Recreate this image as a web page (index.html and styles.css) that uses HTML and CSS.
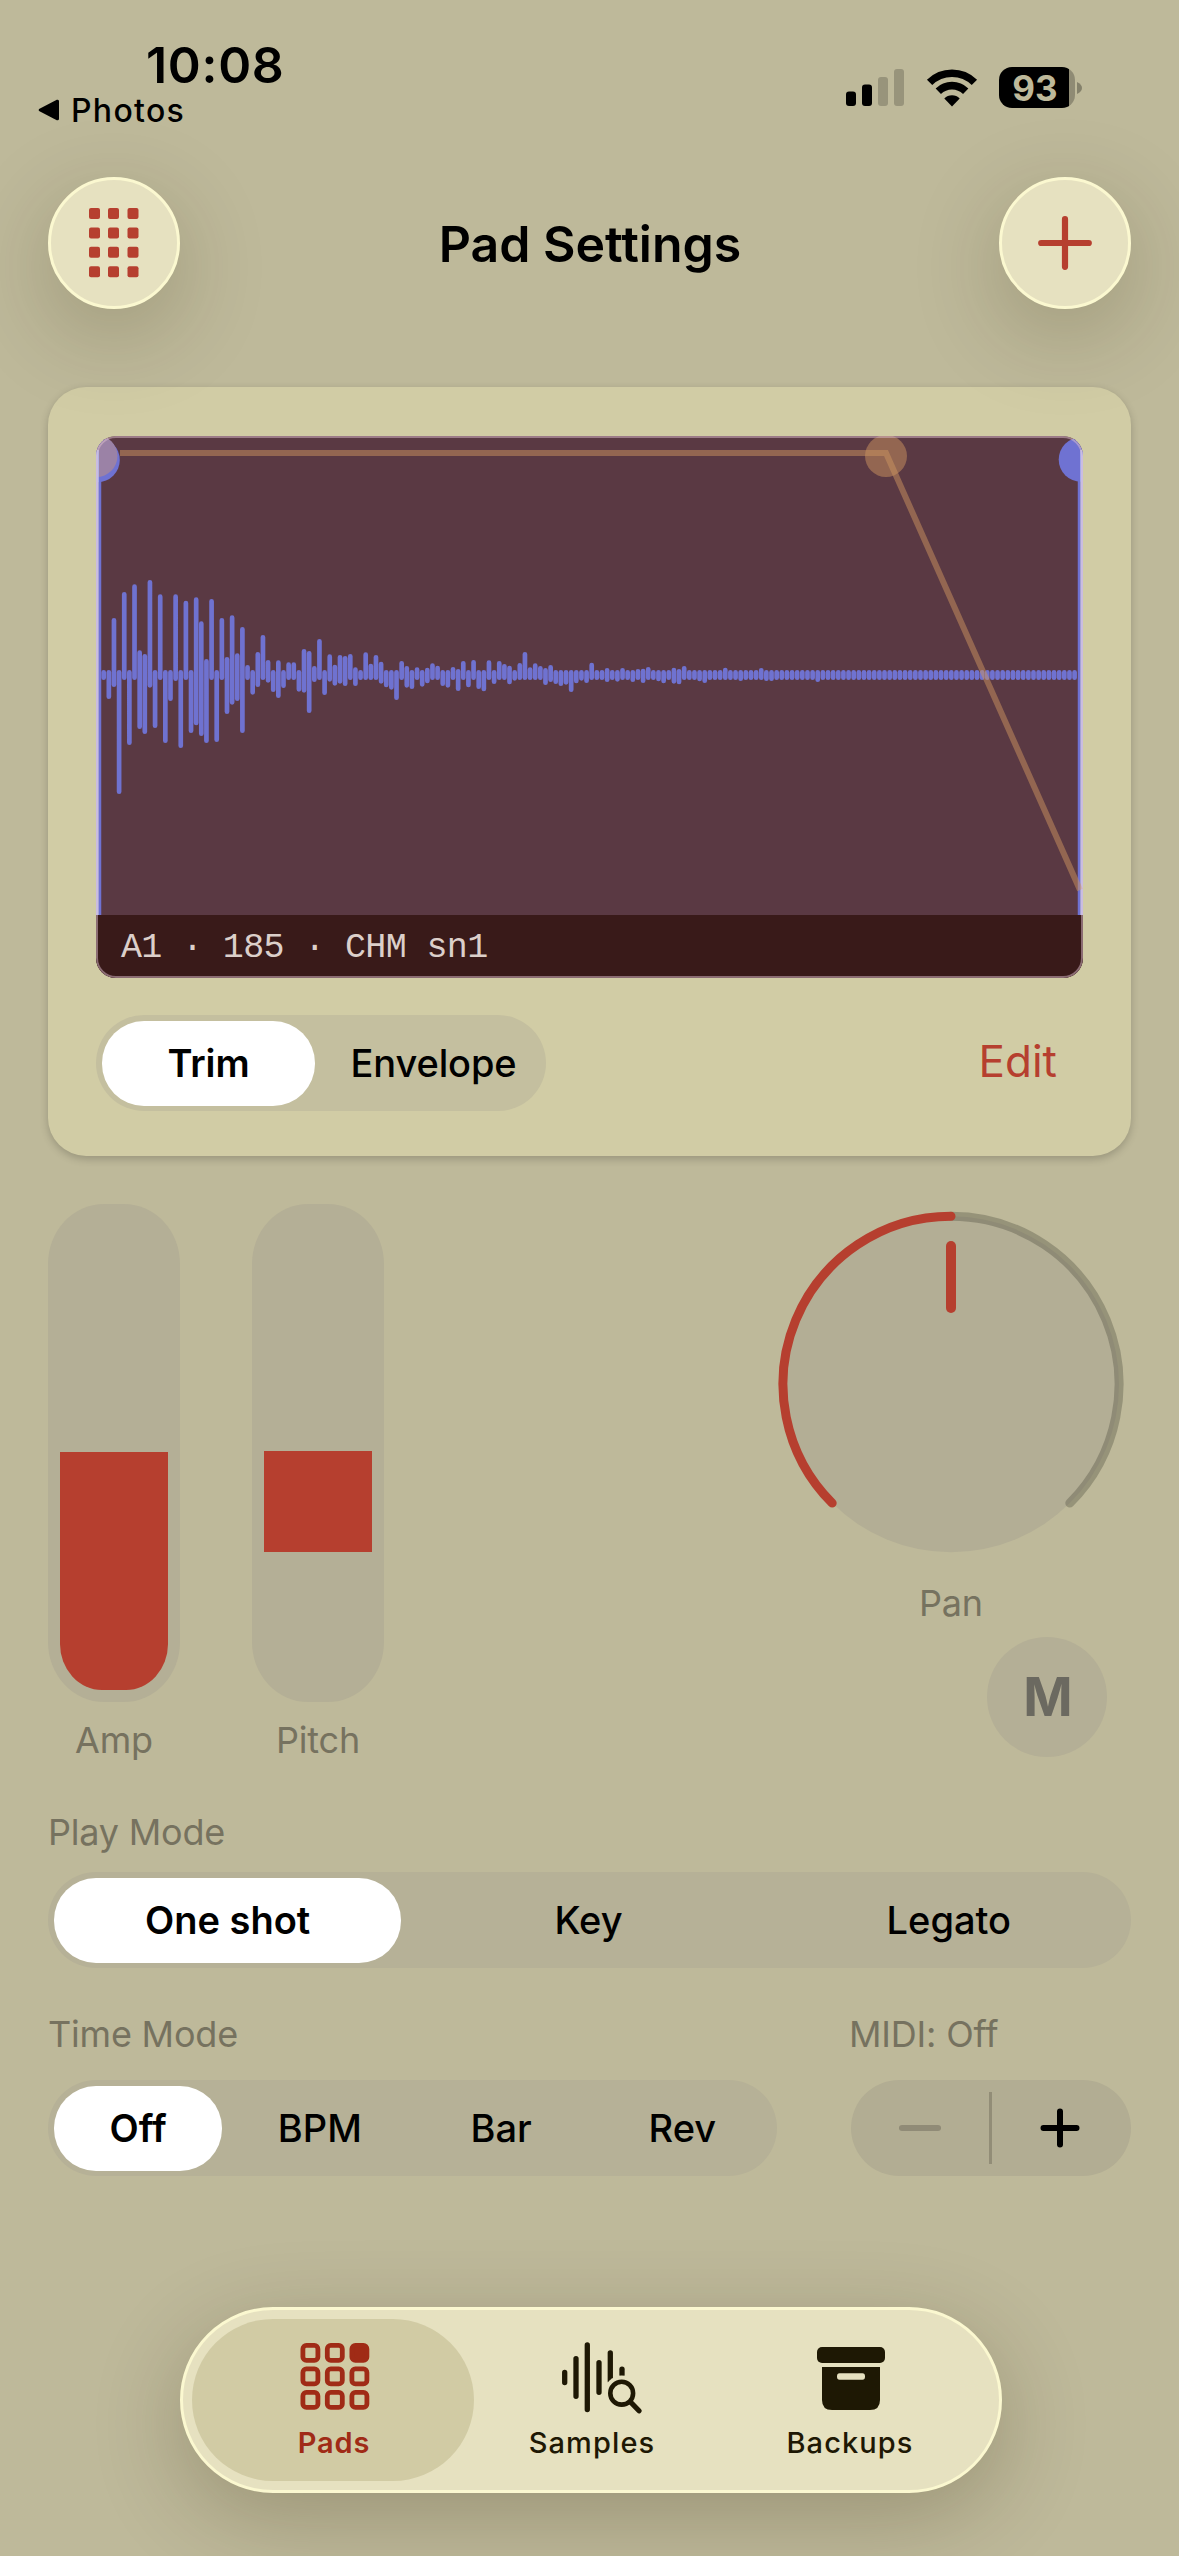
FILE: index.html
```html
<!DOCTYPE html>
<html lang="en">
<head>
<meta charset="utf-8">
<title>Pad Settings</title>
<link rel="stylesheet" href="styles.css">
</head>
<body>
<div class="screen">
  <div class="status">
    <div class="status-left">
      <div class="time">10:08</div>
      <div class="back">
        <svg width="22" height="22" viewBox="0 0 22 22"><path d="M2.2 11 L19.5 2.2 V19.8 Z" fill="#000" stroke="#000" stroke-width="3" stroke-linejoin="round"/></svg>
        <span>Photos</span>
      </div>
    </div>
    <div class="status-right">
      <svg class="signal" width="58" height="38" viewBox="0 0 58 38">
        <rect x="0" y="22.5" width="10" height="14.5" rx="3"/>
        <rect x="16" y="15.5" width="10" height="21.5" rx="3"/>
        <rect x="32" y="8" width="10" height="29" rx="3" fill-opacity=".2"/>
        <rect x="48" y="0" width="10" height="37" rx="3" fill-opacity=".2"/>
      </svg>
      <svg class="wifi" width="52" height="38" viewBox="0 0 52 38">
        <path d="M3.6 13.4 A32 32 0 0 1 48.4 13.4" fill="none" stroke="#000" stroke-width="7.6"/>
        <path d="M12.3 22.2 A19.6 19.6 0 0 1 39.7 22.2" fill="none" stroke="#000" stroke-width="7.6"/>
        <path d="M26 37.5 L18.3 29.4 A11 11 0 0 1 33.7 29.4 Z"/>
      </svg>
      <div class="battery">93</div>
      <svg width="5" height="12" viewBox="0 0 5 12"><path d="M0 0 Q5 2.5 5 6 Q5 9.5 0 12 Z" fill-opacity=".3"/></svg>
    </div>
  </div>

  <header class="header">
    <button class="round">
      <svg width="50" height="70" viewBox="0 0 50 70" fill="#b63f2f">
        <rect x="0" y="0" width="11" height="11" rx="2"/><rect x="19" y="0" width="11" height="11" rx="2"/><rect x="38.5" y="0" width="11" height="11" rx="2"/>
        <rect x="0" y="19.4" width="11" height="11" rx="2"/><rect x="19" y="19.4" width="11" height="11" rx="2"/><rect x="38.5" y="19.4" width="11" height="11" rx="2"/>
        <rect x="0" y="38.8" width="11" height="11" rx="2"/><rect x="19" y="38.8" width="11" height="11" rx="2"/><rect x="38.5" y="38.8" width="11" height="11" rx="2"/>
        <rect x="0" y="58.2" width="11" height="11" rx="2"/><rect x="19" y="58.2" width="11" height="11" rx="2"/><rect x="38.5" y="58.2" width="11" height="11" rx="2"/>
      </svg>
    </button>
    <h1>Pad Settings</h1>
    <button class="round">
      <svg width="54" height="54" viewBox="0 0 54 54"><path d="M27 3.2 V50.8 M3.2 27 H50.8" stroke="#b63f2f" stroke-width="6.2" stroke-linecap="round"/></svg>
    </button>
  </header>

  <section class="card">
    <div class="wave">
      <svg class="plot" width="987" height="479" viewBox="0 0 987 479">
        <path id="bars" fill="none" stroke="#6f72d0" stroke-width="4.7" stroke-linecap="round"/>
        <path d="M4 24 V479 M983 24 V479" stroke="#6f72d2" stroke-width="2.5"/>
        <circle cx="1.5" cy="24" r="22.3" fill="#6f72d2"/>
        <circle cx="985" cy="23.5" r="22.3" fill="#6f72d2"/>
        <circle cx="0.5" cy="20" r="21" fill="#9b82a6"/>
        <path d="M1.4 14 V479 M985.6 14 V479" stroke="#b7bbf2" stroke-width="2.8"/>
        <path d="M24 17 H790 L984 454" fill="none" stroke="#cc9460" stroke-opacity=".5" stroke-width="6"/>
        <circle cx="790" cy="20" r="21" fill="#cc9460" fill-opacity=".5"/>
      </svg>
      <div class="wave-name">A1 · 185 · CHM sn1</div>
      <div class="wave-edge"></div>
    </div>
    <div class="card-row">
      <div class="segments seg-edit"><div class="on">Trim</div><div>Envelope</div></div>
      <a class="edit">Edit</a>
    </div>
  </section>

  <section class="controls">
    <div class="slider">
      <div class="track"><div class="fill-amp"></div></div>
      <label>Amp</label>
    </div>
    <div class="slider">
      <div class="track"><div class="fill-pitch"></div></div>
      <label>Pitch</label>
    </div>
    <div class="knob">
      <svg width="360" height="360" viewBox="0 0 360 360" fill="none" stroke-linecap="round">
        <circle cx="180" cy="180.3" r="168" fill="#b3ae95"/>
        <path d="M180 12.3 A168 168 0 0 1 298.8 299.1" stroke="#3c3a30" stroke-opacity=".3" stroke-width="9"/>
        <path d="M61.2 299.1 A168 168 0 0 1 180 12.3" stroke="#b63f2f" stroke-width="9"/>
        <path d="M180 42 V104" stroke="#b63f2f" stroke-width="10"/>
      </svg>
      <label>Pan</label>
      <div class="mute">M</div>
    </div>
  </section>

  <section class="field">
    <label>Play Mode</label>
    <div class="segments seg-play"><div class="on">One shot</div><div>Key</div><div>Legato</div></div>
  </section>

  <section class="fields">
    <div class="field time-field">
      <label>Time Mode</label>
      <div class="segments seg-time"><div class="on">Off</div><div>BPM</div><div>Bar</div><div>Rev</div></div>
    </div>
    <div class="field midi-field">
      <label>MIDI: Off</label>
      <div class="stepper">
        <svg width="42" height="42" viewBox="0 0 42 42"><path d="M3 21 H39" stroke="#908b77" stroke-width="6.2" stroke-linecap="round"/></svg>
        <i></i>
        <svg width="42" height="42" viewBox="0 0 42 42"><path d="M4.5 21 H37.5 M21 4.5 V37.5" stroke="#000" stroke-width="6" stroke-linecap="round"/></svg>
      </div>
    </div>
  </section>

  <nav class="tabs">
    <div class="tab active">
      <svg width="70" height="76" viewBox="0 0 70 76" fill="none" stroke="#a02b16" stroke-width="4.8">
        <rect x="2.9" y="6.4" width="15" height="15" rx="3.5"/><rect x="27.3" y="6.4" width="15" height="15" rx="3.5"/><rect x="51.9" y="6.4" width="15" height="15" rx="3.5" fill="#a02b16"/>
        <rect x="2.9" y="29.9" width="15" height="15" rx="3.5"/><rect x="27.3" y="29.9" width="15" height="15" rx="3.5"/><rect x="51.9" y="29.9" width="15" height="15" rx="3.5"/>
        <rect x="2.9" y="53.4" width="15" height="15" rx="3.5"/><rect x="27.3" y="53.4" width="15" height="15" rx="3.5"/><rect x="51.9" y="53.4" width="15" height="15" rx="3.5"/>
      </svg>
      <b>Pads</b>
    </div>
    <div class="tab tab-samples">
      <svg width="82" height="76" viewBox="0 0 82 76" fill="none" stroke="#1e1804" stroke-width="5.3" stroke-linecap="round">
        <path d="M4.7 33.4 V43.6 M16 19.6 V57.3 M27.3 6 V70.6 M39 23.6 V53.3"/>
        <path d="M50.3 14 V42"/>
        <path d="M62 30.2 V36"/>
        <circle cx="61.7" cy="54.2" r="17.6" fill="#e6e1c0" stroke="none"/>
        <circle cx="61.7" cy="54.2" r="11.4" stroke-width="4.6"/>
        <path d="M70.5 63 L79 71.8" stroke-width="5.2"/>
      </svg>
      <b>Samples</b>
    </div>
    <div class="tab">
      <svg width="68" height="76" viewBox="0 0 68 76" fill="#1e1804">
        <rect x="0" y="8" width="68" height="16" rx="5"/>
        <path fill-rule="evenodd" d="M5 28 H63 V61 Q63 71 53 71 H15 Q5 71 5 61 Z M22.5 34.3 Q20 34.3 20 37.5 Q20 40.7 22.5 40.7 H45.5 Q48 40.7 48 37.5 Q48 34.3 45.5 34.3 Z"/>
      </svg>
      <b>Backups</b>
    </div>
  </nav>
</div>
<script src="wave.js"></script>
</body>
</html>
```

FILE: wave.js
```js
// Peaks above and below the centre line, one [up, down] pair per bar, in thirds of a pixel.
const peaks = [
  [15,15],[15,72],[171,36],[15,357],[249,15],[15,210],[272,15],[74,162],[63,177],[285,38],
  [15,159],[242,15],[15,204],[15,78],[242,18],[15,219],[223,15],[15,174],[233,151],[161,183],
  [48,204],[228,15],[15,201],[171,15],[54,117],[179,89],[65,78],[144,174],[30,15],[15,59],
  [69,36],[120,15],[45,23],[15,51],[44,69],[15,39],[38,15],[38,15],[15,50],[78,53],
  [72,114],[27,21],[108,15],[15,60],[62,20],[31,32],[60,26],[57,33],[63,15],[23,33],
  [15,15],[68,15],[34,15],[60,15],[40,26],[15,37],[15,44],[15,75],[42,15],[27,38],
  [15,42],[23,15],[15,35],[22,25],[35,15],[28,15],[15,33],[15,38],[24,15],[18,48],
  [42,15],[15,37],[45,15],[15,42],[15,49],[44,15],[15,27],[42,15],[33,15],[28,28],
  [15,17],[36,15],[69,15],[23,15],[35,15],[27,15],[21,30],[30,21],[15,27],[15,33],
  [15,29],[15,51],[15,25],[15,17],[15,24],[37,15],[15,15],[15,15],[21,21],[15,15],
  [15,20],[21,15],[15,15],[15,21],[18,15],[19,24],[24,15],[15,15],[15,19],[15,25],
  [15,15],[22,26],[18,28],[27,15],[15,15],[15,15],[15,19],[15,24],[15,15],[15,15],
  [15,15],[22,15],[15,15],[15,15],[15,18],[15,15],[15,15],[15,15],[21,15],[15,18],[15,18]
];
const count = 190, pitch = 5.137, firstX = 7.7, midY = 239, cap = 2.35;
let d = '';
for (let i = 0; i < count; i++) {
  const [up, down] = peaks[i] || (i === 139 ? [15, 21] : [15, 15]);
  const x = (firstX + i * pitch).toFixed(2);
  d += `M${x} ${(midY - up / 3 + cap).toFixed(2)}V${(midY + down / 3 - cap).toFixed(2)}`;
}
document.getElementById('bars').setAttribute('d', d);
```

FILE: styles.css
```css
* { box-sizing: border-box; }
body { margin: 0; background: #beb99a; }
svg { display: block; flex: none; }
.screen {
  width: 1179px;
  height: 2556px;
  overflow: hidden;
  background: #beb99a;
  color: #000;
  font-family: Inter, "Liberation Sans", sans-serif;
  padding: 0 48px;
}

.status { height: 177px; display: flex; justify-content: space-between; }
.status-left { padding-top: 40px; }
.time { font-size: 50px; font-weight: 600; line-height: 50px; letter-spacing: .7px; padding-left: 98px; }
.back { display: flex; align-items: center; gap: 11px; margin-left: -10px; height: 40px; font-size: 32px; font-weight: 500; line-height: 41px; letter-spacing: 1.3px; }
.status-right { display: flex; align-items: center; height: 41px; margin-top: 67px; padding-right: 49px; }
.signal { margin-right: 22px; }
.wifi { margin-right: 21px; }
.battery {
  width: 76px; height: 41px; margin-right: 2px; padding-right: 4px;
  border-radius: 13px;
  background: linear-gradient(to right, #000 70px, #8f8b74 70px);
  color: #beb99a; text-align: center; font-size: 35px; font-weight: 700; line-height: 42px;
}

.header { position: relative; z-index: 1; display: flex; justify-content: space-between; align-items: center; height: 132px; }
.header h1 { margin: 2px 0 0 1px; font-size: 50px; font-weight: 600; line-height: 60px; }
.round {
  display: flex; align-items: center; justify-content: center;
  width: 132px; height: 132px; padding: 0; border: 3px solid #fbf8d0; border-radius: 50%;
  background: #e6e1c0; box-shadow: 0 24px 90px rgba(40, 30, 0, .22);
}

.card { margin-top: 78px; height: 769px; padding: 49px 48px 45px; border-radius: 38px; background: #d1cca5; box-shadow: 0 3px 9px rgba(0, 0, 0, .2); }
.wave { position: relative; height: 542px; border-radius: 20px; overflow: hidden; background: #5a3943; }
.wave-name { height: 63px; padding: 2px 0 0 25px; background: #391a19; color: #dccfca; font-family: "Liberation Mono", monospace; font-size: 35px; line-height: 63px; letter-spacing: -.64px; white-space: pre; }
.wave-edge { position: absolute; inset: 0; border: 2px solid rgba(222, 190, 205, .5); border-radius: 20px; }
.card-row { display: flex; justify-content: space-between; align-items: center; margin-top: 37px; }
.edit { padding-right: 26px; color: #b63f2f; font-size: 44px; line-height: 92px; height: 96px; }

.segments { display: grid; height: 96px; border-radius: 48px; background: #b6b197; font-size: 38px; font-weight: 500; text-align: center; line-height: 97px; }
.segments .on { margin: 6px 7px 6px 6px; border-radius: 42px; background: #fff; font-weight: 600; line-height: 85px; }
.seg-edit { width: 450px; grid-template-columns: 1fr 1fr; background: #c4bf9f; letter-spacing: -.1px; }
.seg-edit .on { margin-right: 6px; }
.seg-play { grid-template-columns: repeat(3, 1fr); padding-right: 2px; }
.seg-time { grid-template-columns: repeat(4, 1fr); padding-right: 4px; }

label { display: block; height: 44px; color: #76725f; font-size: 36px; line-height: 44px; letter-spacing: -.2px; }
.controls { display: flex; margin-top: 48px; height: 559px; }
.slider { width: 132px; margin-right: 72px; text-align: center; }
.track { display: flex; flex-direction: column; height: 498px; margin-bottom: 16px; padding: 12px; border-radius: 56px / 60px; background: #b4af96; }
.fill-amp { height: 238px; margin-top: auto; border-radius: 0 0 42px 42px / 0 0 46px 46px; background: #b63f2f; }
.fill-pitch { height: 101px; margin-top: 235px; background: #b63f2f; }
.knob { width: 360px; margin-left: auto; text-align: center; }
.knob label { margin-top: 17px; }
.mute { width: 120px; height: 120px; margin: 12px 24px 0 auto; padding-left: 2px; border-radius: 50%; background: #b4af96; color: #6b6960; font-size: 53px; font-weight: 700; line-height: 121px; }

.field label { margin-bottom: 18px; }
.controls + .field { margin-top: 47px; }
.fields { display: flex; justify-content: space-between; margin-top: 44px; }
.fields .field label { margin-bottom: 24px; }
.time-field { width: 729px; }
.midi-field { width: 280px; }
.midi-field label { margin-left: -2px; }
.stepper { display: flex; align-items: center; justify-content: space-between; height: 96px; padding: 0 50px 0 48px; border-radius: 48px; background: #b2ad93; }
.stepper i { width: 3px; height: 72px; background: #928d77; }

.tabs { display: flex; width: 822px; height: 186px; margin: 131px 0 0 132px; padding: 9px; border: 3px solid #fbf8d0; border-radius: 93px; background: #e6e1c0; box-shadow: 0 24px 90px rgba(40, 30, 0, .24); color: #1e1804; }
.tab { display: flex; flex-direction: column; align-items: center; width: 282px; height: 162px; padding-top: 20px; border-radius: 81px; }
.tab + .tab { margin-left: -24px; }
.tab svg { margin-left: 3px; }
.tab b { margin-top: 8px; font-size: 29px; font-weight: 500; line-height: 40px; letter-spacing: 1.1px; padding-left: 2px; }
.tab.active { background: #d1cba4; color: #a02b16; }
.tab.active b { font-weight: 600; letter-spacing: .9px; }
.tab.tab-samples svg { margin-left: 20px; }
```
